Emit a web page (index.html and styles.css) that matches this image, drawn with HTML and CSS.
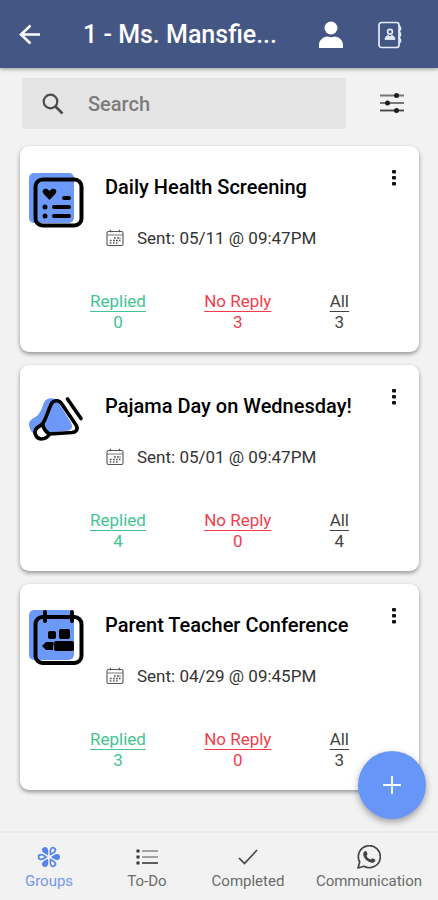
FILE: index.html
```html
<!DOCTYPE html>
<html lang="en">
<head>
<meta charset="utf-8">
<meta name="viewport" content="width=device-width, initial-scale=1">
<title>Ms. Mansfield</title>
<link rel="stylesheet" href="styles.css">
</head>
<body>
<svg class="sprite" aria-hidden="true">
  <symbol id="calendar" viewBox="0 0 18 18">
    <rect x="1" y="2.500" width="16" height="14" rx="1.500" fill="none" stroke="#555" stroke-width="1.100"/>
    <path d="M1 6h16" stroke="#777" stroke-width="1"/>
    <path d="M4.500 .8v2.400M13.500 .8v2.400" stroke="#555" stroke-width="1.200"/>
    <path d="M8 9h1.800M11 9h1.800M13.500 9h1M3.800 11.500h1.800M7 11.500h1.800M10 11.500h1.800M13 11.500h1.500M3.800 14h1.500M7 14h1.500M10 14h1.500" stroke="#555" stroke-width="1.300"/>
  </symbol>
  <symbol id="dots" viewBox="0 0 4 16">
    <rect width="4" height="3.500" rx="1" fill="#111"/><rect y="6" width="4" height="3.500" rx="1" fill="#111"/><rect y="12" width="4" height="3.500" rx="1" fill="#111"/>
  </symbol>
</svg>

<header class="topbar">
  <button class="icon-button" aria-label="Back">
    <svg width="22" height="22" viewBox="0 0 22 22" fill="none" stroke="#fff" stroke-width="2.600"><path d="M21 10.500H2M11.500 1.500 2 10.500l9.500 9"/></svg>
  </button>
  <h1 class="topbar-title">1 - Ms. Mansfie...</h1>
  <button class="icon-button profile" aria-label="Profile">
    <svg width="26" height="28" viewBox="0 0 26 28" fill="#fff"><circle cx="13" cy="7" r="6.500"/><path d="M1 27v-3c0-5.500 5-8.500 8.500-8.500q3.500 1.500 7 0C20 15.500 25 18.500 25 24v3z"/></svg>
  </button>
  <button class="icon-button" aria-label="Contacts">
    <svg width="24" height="28" viewBox="0 0 24 28" fill="none" stroke="#e6ebf7" stroke-width="1.700">
      <rect x="1" y="1.500" width="20" height="25" rx="2.500"/>
      <path d="M21 4.500q3 3 0 6q3 3 0 6q3 3 0 6"/>
      <circle cx="12" cy="10.800" r="2.400"/><path d="M7 18.500c0-3 2-3.800 3.500-4l1.500 1.500 1.500-1.500c1.500.2 3.500 1 3.500 4z" fill="#e6ebf7" stroke-width=".8"/>
    </svg>
  </button>
</header>

<main class="content">
  <form class="toolbar" role="search">
    <label class="search">
      <svg width="22" height="22" viewBox="0 0 22 22" fill="none" stroke="#4b4b4b" stroke-width="2.200"><circle cx="8.500" cy="8.500" r="6.800"/><path d="m13.500 13.500 7 7" stroke-width="2.600"/></svg>
      <input class="search-input" type="search" placeholder="Search" aria-label="Search">
    </label>
    <button class="icon-button" type="button" aria-label="Filters">
      <svg width="24" height="22" viewBox="0 0 24 22"><path d="M0 2.500h24M0 10h24" stroke="#777" stroke-width="1.800"/><path d="M0 17.500h24" stroke="#444" stroke-width="1.800"/><g fill="#1d1d1d"><circle cx="16.500" cy="2.500" r="2.500"/><circle cx="7.500" cy="10" r="2.500"/><circle cx="16.500" cy="17.500" r="2.500"/></g></svg>
    </button>
  </form>

  <article class="card">
    <div class="card-head">
      <svg class="card-icon" viewBox="0 0 56 58">
        <rect x="1" y="2" width="45" height="50" rx="5" fill="#6c98f8"/>
        <path d="M46 9h4q3 0 3 4v38q0 3-3 3H25v-2h16q5 0 5-5z" fill="#fff"/>
        <rect x="7.500" y="8.500" width="46" height="46" rx="7" fill="none" stroke="#000" stroke-width="4"/>
        <path d="M21.500 29 15.300 22.500C13 19 17.500 15.500 21.500 20c4-4.500 8.500-1 6.200 2.500z"/>
        <path d="M36 27h5M26 36h15M26 45h15" stroke="#000" stroke-width="4" stroke-linecap="round"/>
        <circle cx="17" cy="36" r="2.500"/><circle cx="17" cy="45" r="2.500"/>
      </svg>
      <div class="card-text">
        <h2 class="card-title">Daily Health Screening</h2>
        <p class="sent"><svg class="sent-icon"><use href="#calendar"/></svg>Sent: 05/11 @ 09:47PM</p>
      </div>
      <button class="more" aria-label="More options"><svg width="4" height="16"><use href="#dots"/></svg></button>
    </div>
    <div class="stats">
      <a class="stat replied" href="#"><span class="stat-label">Replied</span><span>0</span></a>
      <a class="stat no-reply" href="#"><span class="stat-label">No Reply</span><span>3</span></a>
      <a class="stat" href="#"><span class="stat-label">All</span><span>3</span></a>
    </div>
  </article>

  <article class="card">
    <div class="card-head">
      <svg class="card-icon" viewBox="0 0 56 58">
        <path d="M1 34c0-4 5-6 8-8q4-4 6-11c2-8 10-8 14-5L42 31c4 6 2 10-5 10L18 43l-9 3C4 43 1 39 1 34z" fill="#6c98f8"/>
        <path d="m7 41 7-5 6 8-4 5q-8 1-9-6z" fill="#fff"/>
        <g fill="none" stroke="#000" stroke-width="3.600" stroke-linejoin="round" stroke-linecap="round">
          <path d="M14.500 34C18 29 20 21 23 14.500c2-4.500 8-5 10.500-1L48 35c2.500 4 .5 7-4 7.500L21.500 44Q16 41 14.500 34z"/>
          <path d="M14.500 34 9.500 37.500c-5 4-1.500 11 3.500 11.500 4 0 7-2 8.500-5"/>
          <path d="m39.500 9 13.500 19.500"/>
        </g>
      </svg>
      <div class="card-text">
        <h2 class="card-title">Pajama Day on Wednesday!</h2>
        <p class="sent"><svg class="sent-icon"><use href="#calendar"/></svg>Sent: 05/01 @ 09:47PM</p>
      </div>
      <button class="more" aria-label="More options"><svg width="4" height="16"><use href="#dots"/></svg></button>
    </div>
    <div class="stats">
      <a class="stat replied" href="#"><span class="stat-label">Replied</span><span>4</span></a>
      <a class="stat no-reply" href="#"><span class="stat-label">No Reply</span><span>0</span></a>
      <a class="stat" href="#"><span class="stat-label">All</span><span>4</span></a>
    </div>
  </article>

  <article class="card">
    <div class="card-head">
      <svg class="card-icon" viewBox="0 0 56 58">
        <rect x="1" y="1" width="45" height="50" rx="5" fill="#6c98f8"/>
        <path d="M46 9h4q3 0 3 4v37q0 3-3 3H25v-2h16q5 0 5-5z" fill="#fff"/>
        <rect x="7.500" y="8" width="46" height="46" rx="7" fill="none" stroke="#000" stroke-width="4"/>
        <path d="M17 3v9M44 3v9" stroke="#000" stroke-width="4" stroke-linecap="round"/>
        <rect x="20" y="22" width="8" height="8" rx="2"/><rect x="31" y="20" width="11" height="10" rx="2"/>
        <path d="m14 37 4-4h7l1 2-1 2v4h-7z"/><rect x="26" y="32" width="20" height="10" rx="2"/>
      </svg>
      <div class="card-text">
        <h2 class="card-title">Parent Teacher Conference</h2>
        <p class="sent"><svg class="sent-icon"><use href="#calendar"/></svg>Sent: 04/29 @ 09:45PM</p>
      </div>
      <button class="more" aria-label="More options"><svg width="4" height="16"><use href="#dots"/></svg></button>
    </div>
    <div class="stats">
      <a class="stat replied" href="#"><span class="stat-label">Replied</span><span>3</span></a>
      <a class="stat no-reply" href="#"><span class="stat-label">No Reply</span><span>0</span></a>
      <a class="stat" href="#"><span class="stat-label">All</span><span>3</span></a>
    </div>
  </article>
</main>

<button class="fab" aria-label="Add">
  <svg width="18" height="18" viewBox="0 0 18 18" stroke="#fff" stroke-width="1.800"><path d="M9 0v18M0 9h18"/></svg>
</button>

<nav class="tabs">
  <a class="tab active" href="#">
    <svg class="tab-icon" viewBox="-12 -12 24 24">
      <g fill="#5484ec">
        <path d="M0-2Q-3-6-3-8a3 3 0 0 1 6 0Q3-6 0-2z" transform="rotate(-30)"/>
        <path d="M0-2Q-3-6-3-8a3 3 0 0 1 6 0Q3-6 0-2z" transform="rotate(90)"/>
        <path d="M0-2Q-3-6-3-8a3 3 0 0 1 6 0Q3-6 0-2z" transform="rotate(210)"/>
      </g>
      <g fill="none" stroke="#5484ec" stroke-width="1.700">
        <path d="M0-3Q-2.400-6-2.400-8a2.400 2.400 0 0 1 4.800 0Q2.400-6 0-3z" transform="rotate(30)"/>
        <path d="M0-3Q-2.400-6-2.400-8a2.400 2.400 0 0 1 4.800 0Q2.400-6 0-3z" transform="rotate(150)"/>
        <path d="M0-3Q-2.400-6-2.400-8a2.400 2.400 0 0 1 4.800 0Q2.400-6 0-3z" transform="rotate(270)"/>
      </g>
    </svg>
    Groups
  </a>
  <a class="tab" href="#">
    <svg class="tab-icon" viewBox="0 0 24 24"><path d="M7 6h16M7 12h16" stroke="#888" stroke-width="1.700"/><path d="M7 18h16" stroke="#444" stroke-width="1.700"/><path d="M1.500 6h3M1.500 12h3M1.500 18h3" stroke="#333" stroke-width="2.800"/></svg>
    To-Do
  </a>
  <a class="tab" href="#">
    <svg class="tab-icon" viewBox="0 0 24 24" fill="none" stroke="#444" stroke-width="1.600"><path d="m3 13 5.500 5.500L21 5"/></svg>
    Completed
  </a>
  <a class="tab" href="#">
    <svg class="tab-icon" viewBox="0 0 24 24"><path d="M1 23 2.700 17A11 11 0 1 1 7 21.300z" fill="none" stroke="#444" stroke-width="1.700" stroke-linejoin="round"/><path d="M8.200 6c.6-.2 1-.1 1.300.5l1 2.300c.2.800-1 1.600-1 2.100 1 1.900 2.400 3 4.300 3.700.6.100 1.200-1.400 1.800-1.300l2.400 1.200c.5.300.4.700.2 1.300-.5 1.700-2.500 2.300-4 1.900C10 16.500 7 13.500 6.200 9.800 6 8.300 7 6.500 8.200 6z" fill="#444"/></svg>
    Communication
  </a>
</nav>
</body>
</html>
```
FILE: styles.css
```css
* {
  box-sizing: border-box;
}

body {
  margin: 0;
  min-height: 100vh;
  display: flex;
  flex-direction: column;
  background: #f2f2f2;
  color: #111;
  font-family: Roboto, "Liberation Sans", sans-serif;
}

h1, h2, p {
  margin: 0;
}

button {
  border: 0;
  padding: 0;
  background: none;
  font: inherit;
  cursor: pointer;
}

a {
  color: inherit;
  text-decoration: none;
}

svg {
  display: block;
  flex: none;
}

.sprite {
  position: absolute;
  width: 0;
  height: 0;
}

.topbar {
  display: flex;
  align-items: center;
  height: 68px;
  padding: 2px 36px 0 19px;
  background: #435684;
  box-shadow: 0 1px 4px rgba(0, 0, 0, 0.4);
}

.topbar-title {
  flex: 1;
  margin-left: 42px;
  color: #fff;
  font-size: 25px;
  line-height: 32px;
  font-weight: 500;
  white-space: nowrap;
}

.icon-button {
  display: flex;
}

.profile {
  margin-right: 34px;
}

.content {
  flex: 1;
  display: flex;
  flex-direction: column;
  gap: 13px;
  padding: 10px 19px 40px 20px;
}

.toolbar {
  display: flex;
  align-items: center;
  gap: 34px;
  margin: 0 15px 4px 2px;
}

.search {
  flex: 1;
  display: flex;
  align-items: center;
  gap: 24px;
  min-width: 0;
  height: 51px;
  padding: 0 20px;
  border-radius: 2px;
  background: #e5e5e5;
}

.search-input {
  flex: 1;
  min-width: 0;
  padding: 0;
  border: 0;
  outline: 0;
  background: none;
  color: #333;
  font: 500 20px/24px Roboto, "Liberation Sans", sans-serif;
}

.search-input::placeholder {
  color: #7c7c7c;
  opacity: 1;
}

.card {
  padding: 22px 21px 19px 8px;
  border-radius: 9px;
  background: #fff;
  box-shadow: 0 2px 4px rgba(0, 0, 0, 0.4);
}

.card-head {
  display: flex;
  align-items: flex-start;
}

.card-icon {
  width: 56px;
  height: 58px;
  margin-top: 3px;
}

.card-text {
  flex: 1;
  min-width: 0;
  padding-top: 7px;
  margin-left: 21px;
}

.card-title {
  color: #000;
  font-size: 20px;
  line-height: 24px;
  font-weight: 500;
  white-space: nowrap;
}

.sent {
  display: flex;
  align-items: center;
  gap: 13px;
  margin-top: 28px;
  color: #333;
  font-size: 17px;
  line-height: 22px;
}

.sent-icon {
  width: 18px;
  height: 18px;
  margin-left: 1px;
}

.more {
  padding: 2px;
}

.stats {
  display: flex;
  justify-content: space-between;
  margin-top: 42px;
  padding: 0 49px 0 62px;
}

.stat {
  display: flex;
  flex-direction: column;
  align-items: center;
  color: #444;
  font-size: 17px;
  line-height: 21px;
}

.stat-label {
  text-decoration: underline;
  text-decoration-thickness: 1px;
  text-decoration-skip-ink: none;
  text-underline-offset: 4px;
}

.replied {
  color: #3fc492;
}

.no-reply {
  color: #f33d4b;
}

.fab {
  position: fixed;
  right: 12px;
  bottom: 81px;
  z-index: 2;
  display: grid;
  place-items: center;
  width: 68px;
  height: 68px;
  border-radius: 50%;
  background: #6896f8;
  box-shadow: 0 3px 7px rgba(0, 0, 0, 0.35);
}

.tabs {
  position: sticky;
  bottom: 0;
  display: grid;
  grid-template-columns: 98fr 98fr 104fr 138fr;
  padding: 12px 0 10px;
  border-top: 2px solid #e9e9e9;
  background: #f2f2f2;
}

.tab {
  display: flex;
  flex-direction: column;
  align-items: center;
  gap: 3px;
  color: #6b6b6b;
  font-size: 15px;
  line-height: 18px;
}

.tab-icon {
  width: 24px;
  height: 24px;
}

.active {
  color: #7297ee;
}
```
